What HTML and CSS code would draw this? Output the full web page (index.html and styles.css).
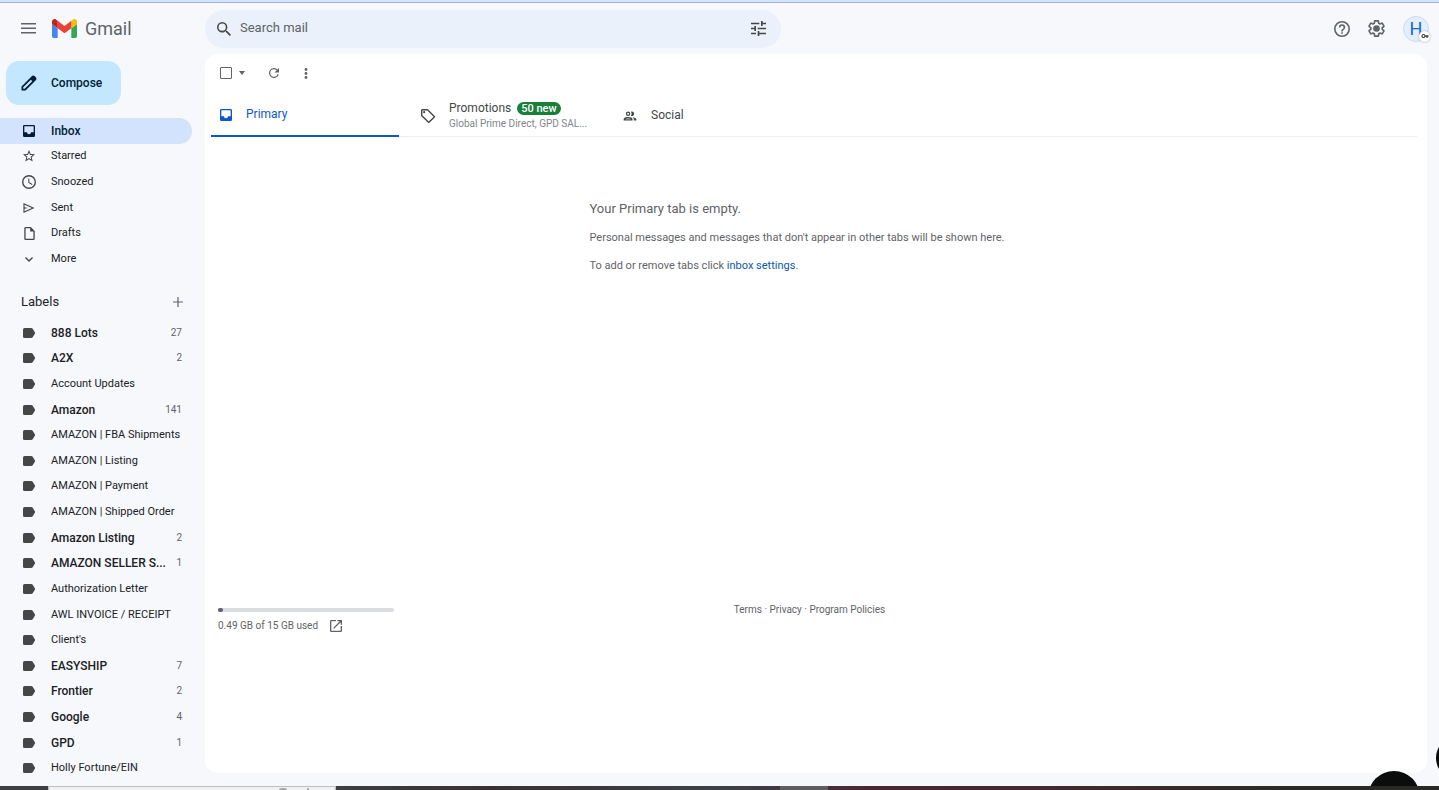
FILE: index.html
```html
<!doctype html>
<html lang="en">
<head>
	<meta charset="UTF-8">
	<title>Gmail</title>
	<link rel="stylesheet" href="styles.css">
</head>
<body>
	<svg class="sprite" aria-hidden="true">
		<symbol id="i-label" viewBox="0 0 12 10"><path d="M1.5 0H8Q9 0 9.700.8L11.700 4Q12.300 5 11.700 6L9.700 9.200Q9 10 8 10H1.500Q0 10 0 8.500V1.500Q0 0 1.500 0z"/></symbol>
		<symbol id="i-inbox" viewBox="3 3 18 18"><path d="M19 3H5a2 2 0 0 0-2 2v14a2 2 0 0 0 2 2h14a2 2 0 0 0 2-2V5a2 2 0 0 0-2-2zm0 11h-4a3 3 0 0 1-6 0H5V5h14z"/></symbol>
	</svg>

	<header class="head">
		<button class="btn menu" aria-label="Main menu">
			<svg width="15" height="11" viewBox="0 0 15 11"><path d="M0 0h15v1.5H0zM0 4.5h15V6H0zM0 9h15v1.5H0z"/></svg>
		</button>
		<a href="#" class="logo">
			<svg width="25" height="19" viewBox="52 42 88 66">
				<path fill="#4285f4" d="M58 108h14V74L52 59v43c0 3.320 2.690 6 6 6"/>
				<path fill="#34a853" d="M120 108h14c3.320 0 6-2.690 6-6V59l-20 15"/>
				<path fill="#fbbc04" d="M120 48v26l20-15v-8c0-7.420-8.470-11.650-14.400-7.200"/>
				<path fill="#ea4335" d="M72 74V48l24 18 24-18v26L96 92"/>
				<path fill="#c5221f" d="M52 51v8l20 15V48l-5.600-4.200c-5.940-4.450-14.400-.220-14.400 7.200"/>
			</svg>
			<span>Gmail</span>
		</a>
		<form class="search">
			<button type="button" class="btn" aria-label="Search">
				<svg width="14" height="14" viewBox="3 3 17.5 17.5"><path d="M15.500 14h-.790l-.280-.270A6.470 6.470 0 0 0 16 9.500 6.500 6.500 0 1 0 9.500 16c1.610 0 3.090-.590 4.230-1.570l.270.280v.790l5 4.990L20.490 19zm-6 0a4.500 4.500 0 1 1 0-9 4.500 4.500 0 0 1 0 9z"/></svg>
			</button>
			<input type="text" placeholder="Search mail" aria-label="Search mail">
			<button type="button" class="btn" aria-label="Show search options">
				<svg width="15" height="15" viewBox="3 3 18 18"><path d="M3 17v2h6v-2zM3 5v2h10V5zm10 16v-2h8v-2h-8v-2h-2v6zM7 9v2H3v2h4v2h2V9zm14 4v-2H11v2zm-6-4h2V7h4V5h-4V3h-2z"/></svg>
			</button>
		</form>
		<div class="tools">
			<button class="btn" aria-label="Support">
				<svg width="16" height="16" viewBox="2 2 20 20"><path d="M11 18h2v-2h-2zm1-16a10 10 0 1 0 0 20 10 10 0 0 0 0-20zm0 18a8 8 0 1 1 0-16 8 8 0 0 1 0 16zm0-14a4 4 0 0 0-4 4h2a2 2 0 1 1 4 0c0 2-3 1.750-3 5h2c0-2.250 3-2.500 3-5a4 4 0 0 0-4-4z"/></svg>
			</button>
			<button class="btn" aria-label="Settings">
				<svg width="17" height="17" viewBox="1.700 1.700 20.600 20.600"><path d="M13.850 22.250h-3.700c-.740 0-1.360-.540-1.450-1.270l-.270-1.890c-.270-.140-.530-.290-.790-.460l-1.800.720c-.7.260-1.470-.030-1.810-.650L2.200 15.530c-.350-.660-.2-1.440.360-1.880l1.530-1.190c-.010-.150-.020-.3-.020-.460 0-.150.010-.310.020-.460l-1.520-1.190c-.590-.450-.740-1.260-.370-1.880l1.850-3.190c.340-.620 1.110-.9 1.790-.630l1.810.730c.260-.170.520-.320.780-.460l.270-1.910c.090-.7.710-1.250 1.440-1.250h3.700c.740 0 1.360.540 1.450 1.270l.270 1.890c.270.140.530.290.790.460l1.800-.720c.710-.260 1.480.030 1.820.650l1.840 3.180c.360.660.2 1.440-.360 1.880l-1.520 1.190c.010.150.020.3.020.460s-.010.310-.020.460l1.520 1.190c.560.450.720 1.230.370 1.860l-1.860 3.220c-.340.620-1.110.9-1.800.630l-1.800-.720c-.260.170-.520.320-.780.460l-.270 1.910c-.1.680-.720 1.220-1.460 1.220zm-3.230-2h2.760l.370-2.550.530-.220c.440-.180.880-.440 1.340-.780l.450-.340 2.380.960 1.380-2.400-2.030-1.580.070-.560c.030-.260.060-.510.060-.780s-.030-.530-.060-.780l-.070-.560 2.030-1.580-1.390-2.400-2.390.960-.450-.350c-.420-.320-.870-.580-1.330-.770l-.520-.220-.370-2.550h-2.760l-.370 2.550-.530.210c-.440.190-.880.440-1.340.790l-.450.330-2.380-.950-1.390 2.390 2.030 1.580-.070.560a7 7 0 0 0 0 1.580l.070.560-2.030 1.580 1.380 2.400 2.390-.960.450.350c.430.330.860.580 1.330.770l.530.220z"/><circle cx="12" cy="12" r="4"/></svg>
			</button>
			<button class="avatar" aria-label="Google Account">H
				<span class="key"><svg width="8" height="4" viewBox="0 0 16 9"><path d="M4.500 0a4.500 4.500 0 1 0 4.200 6H11v3h3V6h2V3H8.700A4.500 4.500 0 0 0 4.500 0zm0 2.500a2 2 0 1 1 0 4 2 2 0 0 1 0-4z"/></svg></span>
			</button>
		</div>
	</header>

	<div class="wrap">
		<nav class="side">
			<button class="compose">
				<svg width="16" height="16" viewBox="0 0 16 16"><path fill-rule="evenodd" d="M.5 15.500v-4L11 1q1.300-1 2.600 0l1.400 1.400q1 1.300 0 2.600L4.500 15.500zM2.200 13.800h1.500L11.300 6.200 9.800 4.700 2.200 12.300z"/></svg>
				Compose
			</button>
			<ul class="folders">
				<li class="on"><a href="#"><svg width="12" height="12"><use href="#i-inbox"/></svg>Inbox</a></li>
				<li><a href="#"><svg width="12" height="12" viewBox="2 2 20 20"><path d="M22 9.240l-7.190-.620L12 2 9.190 8.630 2 9.240l5.460 4.730L5.820 21 12 17.270 18.180 21l-1.630-7.030zM12 15.400l-3.760 2.270 1-4.280-3.320-2.880 4.380-.380L12 6.100l1.710 4.040 4.380.380-3.320 2.880 1 4.280z"/></svg>Starred</a></li>
				<li><a href="#"><svg width="14" height="14" viewBox="2 2 20 20"><path d="M12 2a10 10 0 1 0 0 20 10 10 0 0 0 0-20zm0 18a8 8 0 1 1 0-16 8 8 0 0 1 0 16zm.5-13H11v6l5.200 3.200.8-1.300-4.500-2.700z"/></svg>Snoozed</a></li>
				<li><a href="#"><svg width="12" height="10" viewBox="2 3 20 18"><path d="M2 3v18l20-9zm2 3.100L17.100 12 4 17.900V13.500L10 12 4 10.500z"/></svg>Sent</a></li>
				<li><a href="#"><svg width="11" height="13" viewBox="4 2 16 20"><path d="M14 2H6a2 2 0 0 0-2 2v16a2 2 0 0 0 2 2h12a2 2 0 0 0 2-2V8zM6 20V4h7v5h5v11z"/></svg>Drafts</a></li>
				<li><a href="#"><svg width="8" height="5" viewBox="6 8.600 12 7.400"><path d="M16.590 8.590L12 13.170 7.410 8.590 6 10l6 6 6-6z"/></svg>More</a></li>
			</ul>
			<div class="title">
				<h2>Labels</h2>
				<button class="btn" aria-label="Create new label"><svg width="10" height="10" viewBox="0 0 10 10"><path d="M4.400 0h1.200v4.400H10v1.200H5.600V10H4.400V5.600H0V4.400h4.400z"/></svg></button>
			</div>
			<ul class="labels">
				<li class="new"><a href="#"><svg width="12" height="10"><use href="#i-label"/></svg><span>888 Lots</span><em>27</em></a></li>
				<li class="new"><a href="#"><svg width="12" height="10"><use href="#i-label"/></svg><span>A2X</span><em>2</em></a></li>
				<li><a href="#"><svg width="12" height="10"><use href="#i-label"/></svg><span>Account Updates</span></a></li>
				<li class="new"><a href="#"><svg width="12" height="10"><use href="#i-label"/></svg><span>Amazon</span><em>141</em></a></li>
				<li><a href="#"><svg width="12" height="10"><use href="#i-label"/></svg><span>AMAZON | FBA Shipments</span></a></li>
				<li><a href="#"><svg width="12" height="10"><use href="#i-label"/></svg><span>AMAZON | Listing</span></a></li>
				<li><a href="#"><svg width="12" height="10"><use href="#i-label"/></svg><span>AMAZON | Payment</span></a></li>
				<li><a href="#"><svg width="12" height="10"><use href="#i-label"/></svg><span>AMAZON | Shipped Order</span></a></li>
				<li class="new"><a href="#"><svg width="12" height="10"><use href="#i-label"/></svg><span>Amazon Listing</span><em>2</em></a></li>
				<li class="new"><a href="#"><svg width="12" height="10"><use href="#i-label"/></svg><span>AMAZON SELLER S...</span><em>1</em></a></li>
				<li><a href="#"><svg width="12" height="10"><use href="#i-label"/></svg><span>Authorization Letter</span></a></li>
				<li><a href="#"><svg width="12" height="10"><use href="#i-label"/></svg><span>AWL INVOICE / RECEIPT</span></a></li>
				<li><a href="#"><svg width="12" height="10"><use href="#i-label"/></svg><span>Client's</span></a></li>
				<li class="new"><a href="#"><svg width="12" height="10"><use href="#i-label"/></svg><span>EASYSHIP</span><em>7</em></a></li>
				<li class="new"><a href="#"><svg width="12" height="10"><use href="#i-label"/></svg><span>Frontier</span><em>2</em></a></li>
				<li class="new"><a href="#"><svg width="12" height="10"><use href="#i-label"/></svg><span>Google</span><em>4</em></a></li>
				<li class="new"><a href="#"><svg width="12" height="10"><use href="#i-label"/></svg><span>GPD</span><em>1</em></a></li>
				<li><a href="#"><svg width="12" height="10"><use href="#i-label"/></svg><span>Holly Fortune/EIN</span></a></li>
			</ul>
		</nav>

		<main class="panel">
			<div class="bar">
				<input type="checkbox" aria-label="Select">
				<button class="btn caret" aria-label="Select options"><svg width="6" height="4" viewBox="0 0 6 4"><path d="M0 0h6L3 4z"/></svg></button>
				<button class="btn refresh" aria-label="Refresh"><svg width="10" height="10" viewBox="4 4 16 16"><path d="M17.650 6.350A8 8 0 1 0 19.730 14h-2.080A6 6 0 1 1 12 6c1.660 0 3.140.690 4.220 1.780L13 11h7V4z"/></svg></button>
				<button class="btn" aria-label="More"><svg width="4" height="11" viewBox="0 0 4 11"><circle cx="2" cy="1.500" r="1.400"/><circle cx="2" cy="5.500" r="1.400"/><circle cx="2" cy="9.500" r="1.400"/></svg></button>
			</div>
			<div class="tabs" role="tablist">
				<button class="tab on" role="tab"><svg width="12" height="12"><use href="#i-inbox"/></svg><span class="name">Primary</span></button>
				<button class="tab" role="tab">
					<svg width="14" height="14" viewBox="2 2 20 20"><path d="M21.400 11.600l-9-9A2 2 0 0 0 11 2H4a2 2 0 0 0-2 2v7c0 .550.220 1.050.590 1.420l9 9a2 2 0 0 0 2.820 0l7-7a2 2 0 0 0 0-2.820zM13 20L4 11V4h7l9 9z"/><circle cx="6.500" cy="6.500" r="1.500"/></svg>
					<span class="name">Promotions <b>50 new</b><small>Global Prime Direct, GPD SAL...</small></span>
				</button>
				<button class="tab" role="tab"><svg width="14" height="12" viewBox="1 4 22 16"><path d="M9 13.750c-2.340 0-7 1.170-7 3.500V19h14v-1.750c0-2.330-4.660-3.500-7-3.500zM4.340 17c.840-.580 2.870-1.250 4.660-1.250s3.820.670 4.660 1.250zM9 12a3.500 3.500 0 1 0 0-7 3.500 3.500 0 0 0 0 7zm0-5a1.500 1.500 0 1 1 0 3 1.500 1.500 0 0 1 0-3zm7.040 6.810c1.160.840 1.960 1.960 1.960 3.440V19h4v-1.750c0-2.020-3.500-3.170-5.960-3.440zM15 12a3.500 3.500 0 1 0-1.500-6.660 5.480 5.480 0 0 1 0 6.320c.460.220.960.340 1.500.340z"/></svg><span class="name">Social</span></button>
			</div>
			<div class="empty">
				<div>
					<h3>Your Primary tab is empty.</h3>
					<p>Personal messages and messages that don't appear in other tabs will be shown here.</p>
					<p>To add or remove tabs click <a href="#">inbox settings</a>.</p>
				</div>
			</div>
			<footer class="foot">
				<div class="storage">
					<div class="meter"><i></i></div>
					<a href="#">0.49 GB of 15 GB used <svg width="12" height="12" viewBox="3 3 18 18"><path d="M19 19H5V5h7V3H5a2 2 0 0 0-2 2v14a2 2 0 0 0 2 2h14a2 2 0 0 0 2-2v-7h-2zM14 3v2h3.590l-9.830 9.830 1.410 1.410L19 6.410V10h2V3z"/></svg></a>
				</div>
				<p><a href="#">Terms</a> · <a href="#">Privacy</a> · <a href="#">Program Policies</a></p>
			</footer>
		</main>
	</div>

	<div class="taskbar"><div class="window"><i></i><i></i></div><div class="task"></div></div>
	<div class="bubble"></div>
	<div class="bubble edge"></div>
</body>
</html>
```
FILE: styles.css
```css
*{box-sizing:border-box;}
body,ul,h2,h3,p{margin:0;padding:0;}
html,body{height:100%;}
body{position:relative;display:flex;flex-direction:column;min-height:100%;overflow:hidden;border-top:2px solid #d3e3fd;background:#f6f8fc;color:#202124;font:12px/16px Roboto,"Liberation Sans",sans-serif;}
ul{list-style:none;}
a{color:inherit;text-decoration:none;}
svg{display:block;flex:none;fill:currentColor;}
button,input{font:inherit;color:inherit;}
button{padding:0;border:0;background:none;cursor:pointer;}
.sprite{position:absolute;width:0;height:0;}
.btn{display:flex;align-items:center;justify-content:center;color:#5f6368;}

/* header */
.head{display:flex;align-items:center;height:52px;padding:0 10px 0 21px;border-top:1px solid #a0b4d8;}
.menu{width:15px;margin-right:16px;}
.logo{display:flex;align-items:center;gap:8px;width:153px;color:#5f6368;font-size:18px;line-height:24px;}
.search{display:flex;align-items:center;width:576px;height:38px;padding:0 15px 0 12px;border-radius:19px;background:#eaf1fb;}
.search .btn{color:#444746;}
.search input{flex:1;min-width:0;height:24px;margin:0 9px;padding:0 0 2px;border:0;outline:0;background:none;font-size:13px;}
.search input::placeholder{color:#5f6368;opacity:1;}
.tools{display:flex;align-items:center;gap:18px;margin-left:auto;}
.avatar{position:relative;width:26px;height:26px;border:1px solid #c6dcf5;border-radius:50%;background:#e3effc;color:#1967d2;font-size:18px;line-height:24px;}
.key{position:absolute;right:-2px;bottom:-1px;display:flex;align-items:center;justify-content:center;width:11px;height:11px;border-radius:50%;background:#fff;box-shadow:0 0 2px #999;color:#3c4043;}

/* sidebar */
.wrap{display:flex;flex:1;min-height:0;}
.side{display:flex;flex-direction:column;width:205px;padding:7px 13px 5px 0;font-size:11px;}
.compose{display:flex;align-items:center;gap:14px;width:115px;height:44px;margin:0 0 13px 6px;padding-left:15px;border-radius:13px;background:#c2e7ff;color:#001d35;font-size:12px;font-weight:500;}
.folders{display:grid;grid-auto-rows:1fr;height:154px;}
.folders a{display:grid;grid-template-columns:14px 1fr;align-items:center;column-gap:15px;height:100%;padding-left:22px;}
.folders svg{justify-self:center;color:#444746;}
.folders .on{border-radius:0 13px 13px 0;background:#d3e3fd;color:#001d35;font-size:12px;font-weight:500;}
.folders .on svg{color:#001d35;}
.title{display:flex;align-items:center;justify-content:space-between;height:48px;padding:12px 9px 0 21px;}
.title h2{font-size:13px;font-weight:400;}
.labels{display:grid;grid-template-columns:minmax(0,1fr);grid-auto-rows:1fr;flex:1;}
.labels a{display:flex;align-items:center;height:100%;padding:0 10px 0 23px;}
.labels svg{color:#444746;}
.labels span{flex:1;margin-left:16px;white-space:nowrap;}
.labels em{color:#5f6368;font-size:10px;font-style:normal;font-weight:400;}
.new{font-size:12px;font-weight:500;}

/* mail panel */
.panel{display:flex;flex-direction:column;flex:1;margin:0 12px 13px 0;border-radius:13px;background:#fff;}
.bar{display:flex;align-items:center;height:38px;padding-left:15px;}
.bar input{appearance:none;width:12px;height:12px;margin:0;border:1px solid #5f6368;border-radius:1px;}
.caret{margin:0 24px 0 7px;}
.refresh{margin-right:25px;}
.tabs{display:flex;gap:14px;height:45px;margin:0 10px 0 6px;border-bottom:1px solid #eceff1;}
.tab{display:flex;align-items:center;width:188px;height:45px;padding:2px 0 0 8px;color:#444746;text-align:left;}
.tab svg{width:14px;margin-right:14px;}
.tab.on{border-bottom:2px solid #0b57d0;color:#0b57d0;}
.tab.on svg{margin-right:13px;}
.name{line-height:15px;}
.name b{display:inline-block;margin-left:3px;padding:0 4px;border-radius:7px;background:#188038;color:#fff;font-size:11px;font-weight:500;line-height:13px;}
.name small{display:block;color:#80868b;font-size:10px;white-space:nowrap;}
.empty{display:flex;flex:1;justify-content:center;padding:64px 38px 0 0;color:#5f6368;}
.empty h3{margin-bottom:13px;font-size:13px;font-weight:400;}
.empty p{margin-bottom:12px;font-size:11px;}
.empty a{color:#0b57a4;}
.foot{display:grid;grid-template-columns:1fr auto 1fr;align-items:start;height:171px;padding:0 26px 0 13px;color:#5f6368;font-size:10px;}
.meter{width:176px;height:4px;margin:6px 0;border-radius:2px;background:#dadce0;}
.meter i{display:block;width:5px;height:4px;border-radius:2px;background:#5f6368;}
.storage a{display:flex;align-items:center;gap:12px;}

/* desktop taskbar */
.taskbar{position:relative;z-index:1;display:flex;justify-content:space-between;height:4px;padding:0 611px 0 48px;background:linear-gradient(90deg,#3c3e42 0,#3c3e42 24%,#3a3032 34%,#3c414b 50%,#4b2734 60%,#3f292d 78%,#292b22 90%,#292b22);}
.window{display:flex;justify-content:flex-end;gap:20px;width:288px;padding:1px 26px 0 0;border:1px solid #bcbfc8;border-bottom:0;background:#f1f1f1;}
.window i{width:8px;height:2px;border-radius:4px 4px 0 0;background:#aaa;}
.window i + i{width:2px;}
.task{width:48px;background:#615c62;}
.bubble{position:absolute;right:19px;bottom:-33px;width:52px;height:52px;border-radius:50%;background:#0b0c0c;}
.bubble.edge{right:-41px;bottom:10px;width:44px;height:44px;}
```
